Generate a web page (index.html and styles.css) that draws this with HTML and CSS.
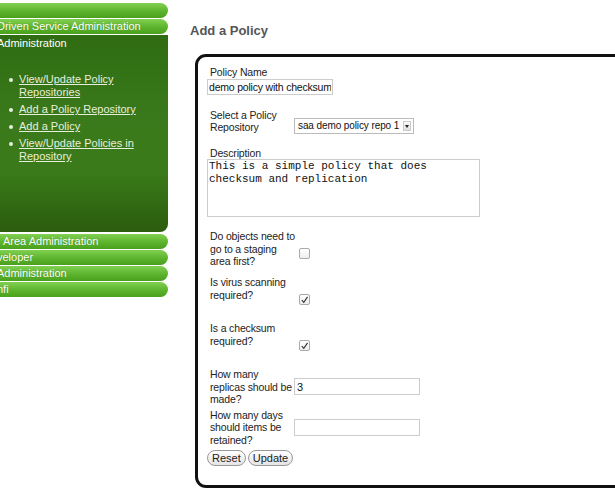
FILE: index.html
```html
<!DOCTYPE html>
<html lang="en">
<head>
  <meta charset="UTF-8" />
  <title>Add a Policy</title>
  <link rel="stylesheet" href="styles.css">
</head>
<body>
  <div class="page">
    <div class="sidebar">
      <div class="pill"></div>
      <div class="pill"><span class="cut">Driven Service Administration</span></div>
      <div class="panel">
        <div class="panel-title"><span class="cut">Administration</span></div>
        <ul class="menu">
          <li><a href="#">View/Update Policy Repositories</a></li>
          <li><a href="#">Add a Policy Repository</a></li>
          <li><a href="#">Add a Policy</a></li>
          <li><a href="#">View/Update Policies in Repository</a></li>
        </ul>
      </div>
      <div class="pill"><span class="area">Area Administration</span></div>
      <div class="pill"><span class="cut">veloper</span></div>
      <div class="pill"><span class="cut">Administration</span></div>
      <div class="pill"><span class="cut">nfi</span></div>
    </div>

    <div class="main">
      <h1>Add a Policy</h1>
      <div class="card">
        <div class="field">
          <label>Policy Name</label>
          <input class="name-input" type="text" value="demo policy with checksum">
        </div>
        <div class="row row-select">
          <label>Select a Policy<br>Repository</label>
          <span class="select-wrap">
            <select class="repo"><option>saa demo policy repo 1</option></select>
            <span class="arrow"></span>
          </span>
        </div>
        <div class="field">
          <label>Description</label>
          <textarea class="desc">This is a simple policy that does
checksum and replication</textarea>
        </div>
        <div class="row row-check">
          <label>Do objects need to go to a staging area first?</label>
          <span class="box"></span>
        </div>
        <div class="row row-check">
          <label>Is virus scanning required?</label>
          <span class="box"><svg viewBox="0 0 10 10" width="10" height="10"><path d="M2 5.2 L4.2 7.6 L8.4 1.6" fill="none" stroke="#333" stroke-width="1.3"/></svg></span>
        </div>
        <div class="row row-check">
          <label>Is a checksum required?</label>
          <span class="box"><svg viewBox="0 0 10 10" width="10" height="10"><path d="M2 5.2 L4.2 7.6 L8.4 1.6" fill="none" stroke="#333" stroke-width="1.3"/></svg></span>
        </div>
        <div class="row row-num">
          <label>How many replicas should be made?</label>
          <input class="num" type="text" value="3">
        </div>
        <div class="row row-num">
          <label>How many days should items be retained?</label>
          <input class="num" type="text" value="">
        </div>
        <div class="buttons">
          <button>Reset</button>
          <button>Update</button>
        </div>
      </div>
    </div>
  </div>
</body>
</html>
```

FILE: styles.css
```css
* {
  box-sizing: border-box;
}
body {
  margin: 0;
  font-family: 'Liberation Sans', Arial, sans-serif;
  font-size: 11px;
  color: #222;
  background: #fff;
  overflow: hidden;
}
.page {
  display: flex;
  align-items: flex-start;
  width: 615px;
  height: 496px;
  overflow: hidden;
}

/* left menu */
.sidebar {
  width: 168px;
  flex: none;
  padding-top: 3px;
  overflow: hidden;
}
.pill {
  height: 15px;
  margin-bottom: 1px;
  border-radius: 0 8px 8px 0;
  background: linear-gradient(#82d052, #5cb42c 55%, #4aa01c);
  color: #fff;
  line-height: 15px;
  white-space: nowrap;
  text-shadow: 0 0 1px rgba(0,0,0,0.25);
}
.cut {
  margin-left: -3px;
}
.area {
  margin-left: 3px;
}
.panel {
  height: 197px;
  margin-bottom: 2px;
  border-radius: 0 0 8px 0;
  background: linear-gradient(#2f6c12, #3b7a1c 45%, #3a7a1a 70%, #2e6410 92%, #2c5c0e);
  color: #fff;
}
.panel-title {
  padding-top: 1px;
  line-height: 14px;
  white-space: nowrap;
}
.menu {
  margin: 23px 0 0 0;
  padding: 0 22px 0 19px;
  list-style: none;
}
.menu li {
  position: relative;
  line-height: 13px;
  margin-bottom: 4px;
}
.menu li::before {
  content: '';
  position: absolute;
  left: -10px;
  top: 5px;
  width: 4px;
  height: 4px;
  border-radius: 50%;
  background: #e8f0e0;
}
.menu a {
  color: #e6efdc;
  text-decoration: underline;
}

/* main */
.main {
  flex: 1;
  padding-left: 22px;
}
h1 {
  margin: 23px 0 16px 0;
  font-size: 13px;
  line-height: 15px;
  color: #555;
}
.card {
  width: 470px;
  height: 434px;
  margin-left: 5px;
  border: 3px solid #111;
  border-radius: 11px;
  padding: 9px 0 0 9px;
}
.field label,
.row label {
  display: block;
  padding-left: 3px;
  font-size: 10.5px;
  letter-spacing: -0.15px;
  line-height: 12.5px;
  color: #222;
}
.name-input {
  width: 126px;
  height: 16px;
  margin-top: 0;
  padding: 0 1px;
  border: 1px solid #ccc;
  font-family: 'Liberation Sans', Arial, sans-serif;
  font-size: 10.5px;
  letter-spacing: -0.2px;
  color: #111;
}
.row {
  display: flex;
}
.row label {
  width: 87px;
  flex: none;
}
.row-select {
  margin-top: 14px;
  align-items: flex-end;
}
.select-wrap {
  position: relative;
  display: block;
  width: 120px;
  height: 16px;
}
.repo {
  appearance: none;
  width: 120px;
  height: 16px;
  padding: 0 12px 0 3px;
  border: 1px solid #bbb;
  border-radius: 0;
  background: #fff;
  font-family: 'Liberation Sans', Arial, sans-serif;
  font-size: 10px;
  letter-spacing: -0.1px;
  color: #111;
}
.arrow {
  position: absolute;
  right: 3px;
  top: 3px;
  width: 8px;
  height: 10px;
  border: 1px solid #ccc;
  background: linear-gradient(#fafafa, #ddd);
}
.arrow::after {
  content: '';
  position: absolute;
  left: 1px;
  top: 3px;
  border-left: 2px solid transparent;
  border-right: 2px solid transparent;
  border-top: 3px solid #222;
}
.row-select + .field {
  margin-top: 13px;
}
.desc {
  display: block;
  width: 273px;
  height: 58px;
  padding: 0 1px;
  border: 1px solid #ccc;
  font-family: 'Liberation Mono', 'Courier New', monospace;
  font-size: 11px;
  line-height: 13px;
  color: #111;
  resize: none;
}
.row-check {
  height: 46px;
  align-items: flex-start;
}
.field + .row-check {
  margin-top: 13px;
}
.row-check label {
  width: 92px;
}
.box {
  width: 11px;
  height: 11px;
  margin-top: 18px;
  border: 1px solid #aaa;
  border-radius: 2px;
  background: linear-gradient(#fff, #eee);
  display: flex;
  align-items: center;
  justify-content: center;
}
.box svg {
  display: block;
}
.row-num {
  align-items: center;
}
.row-num + .row-num {
  margin-top: 3px;
}
.num {
  width: 126px;
  height: 17px;
  padding: 0 2px;
  border: 1px solid #ccc;
  font-family: 'Liberation Sans', Arial, sans-serif;
  font-size: 11px;
  color: #111;
}
.buttons {
  display: flex;
  gap: 2px;
  margin-top: 4px;
}
.buttons button {
  height: 16px;
  padding: 0 4px;
  border: 1px solid #999;
  border-radius: 8px;
  background: linear-gradient(#fff, #e4e4e4);
  font-family: 'Liberation Sans', Arial, sans-serif;
  font-size: 11px;
  line-height: 13px;
  color: #222;
}
```
